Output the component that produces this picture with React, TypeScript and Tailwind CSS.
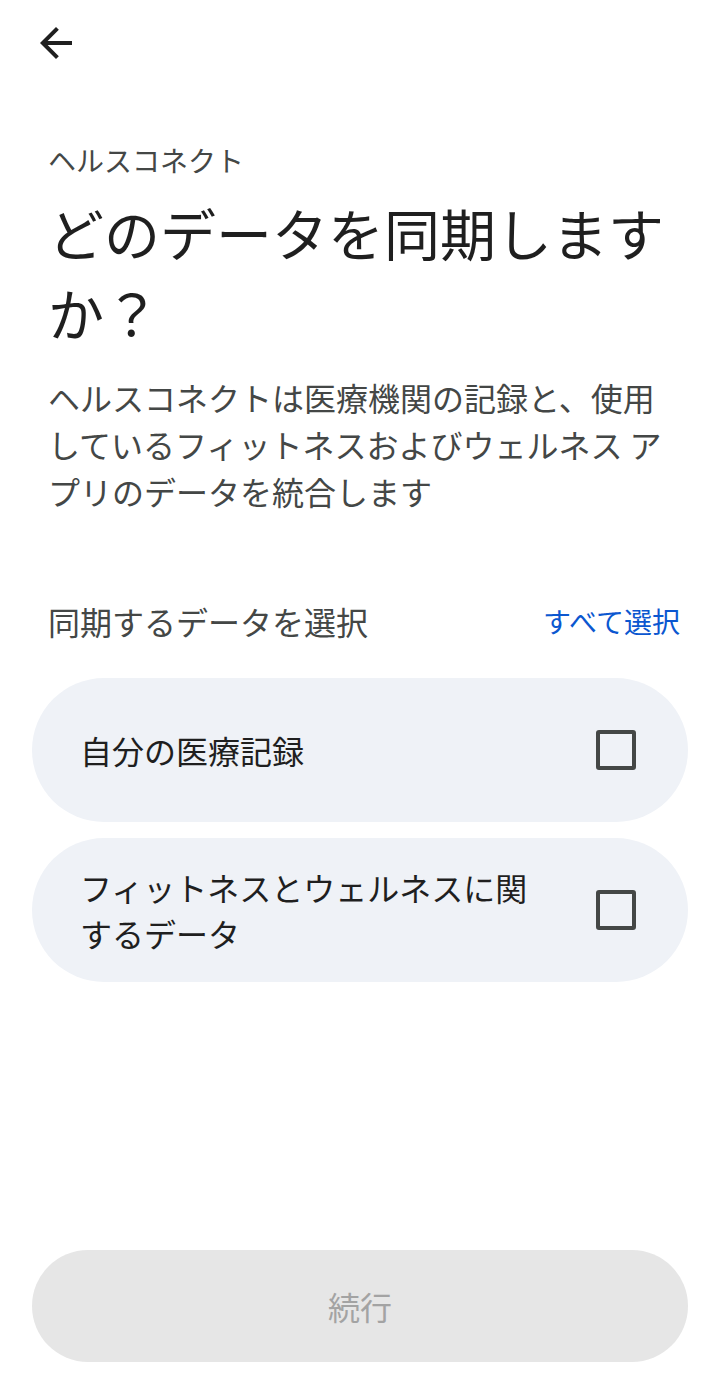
import React, { useState } from 'react';

const font = { fontFamily: '"Noto Sans CJK JP", "Noto Sans", sans-serif' };

const items = [
  { id: 'medical', label: '自分の医療記録' },
  { id: 'fitness', label: 'フィットネスとウェルネスに関するデータ' },
];

export default function App() {
  const [checked, setChecked] = useState<Record<string, boolean>>({});

  const toggle = (id: string) => setChecked(prev => ({ ...prev, [id]: !prev[id] }));
  const selectAll = () => setChecked({ medical: true, fitness: true });
  const anyChecked = Object.values(checked).some(Boolean);

  return (
    <div className="w-[720px] h-[1384px] bg-white flex flex-col" style={font}>
      {/* Header */}
      <div className="h-[96px] pl-[32px] pt-[19px]">
        <button className="w-[48px] h-[48px] flex items-center justify-center text-[#1f1f1f]">
          <svg width="48" height="48" viewBox="0 0 24 24" fill="currentColor">
            <path d="M20 11H7.83l5.59-5.59L12 4l-8 8 8 8 1.41-1.41L7.83 13H20v-2z" />
          </svg>
        </button>
      </div>

      {/* Title block */}
      <div className="pl-[48px] pt-[44px] flex flex-col">
        <div className="text-[28px] leading-[40px] text-[#444746]">ヘルスコネクト</div>
        <h1 className="mt-[12px] text-[56px] leading-[80px] text-[#1f1f1f] font-normal">どのデータを同期しますか？</h1>
        <p className="mt-[22px] text-[32px] leading-[47px] text-[#444746] w-[620px]">
          ヘルスコネクトは医療機関の記録と、使用しているフィットネスおよびウェルネス アプリのデータを統合します
        </p>
      </div>

      {/* Section label */}
      <div className="mt-[82px] pl-[48px] pr-[40px] flex items-center justify-between">
        <div className="text-[32px] leading-[48px] text-[#444746]">同期するデータを選択</div>
        <button onClick={selectAll} className="text-[28px] leading-[40px] text-[#0b57d0]">すべて選択</button>
      </div>

      {/* Options */}
      <div className="mt-[33px] px-[32px] flex flex-col gap-[16px]">
        {items.map(item => (
          <button
            key={item.id}
            onClick={() => toggle(item.id)}
            className="h-[144px] rounded-full bg-[#eff2f7] pl-[48px] pr-[52px] flex items-center justify-between gap-[48px] text-left"
          >
            <span className="flex-1 text-[32px] leading-[46px] text-[#1f1f1f]">{item.label}</span>
            <span
              className={
                checked[item.id]
                  ? 'w-[40px] h-[40px] rounded-[3px] bg-[#0b57d0] flex items-center justify-center shrink-0'
                  : 'w-[40px] h-[40px] rounded-[3px] border-[4px] border-[#444746] shrink-0'
              }
            >
              {checked[item.id] && (
                <svg width="32" height="32" viewBox="0 0 24 24" fill="white">
                  <path d="M9 16.17 4.83 12l-1.42 1.41L9 19 21 7l-1.41-1.41z" />
                </svg>
              )}
            </span>
          </button>
        ))}
      </div>

      {/* Bottom button */}
      <div className="mt-auto px-[32px] pb-[22px]">
        <button
          className={
            anyChecked
              ? 'w-full h-[112px] rounded-full bg-[#0b57d0] text-white text-[32px]'
              : 'w-full h-[112px] rounded-full bg-[#e6e6e6] text-[#a3a3a3] text-[32px]'
          }
        >
          続行
        </button>
      </div>
    </div>
  );
}
